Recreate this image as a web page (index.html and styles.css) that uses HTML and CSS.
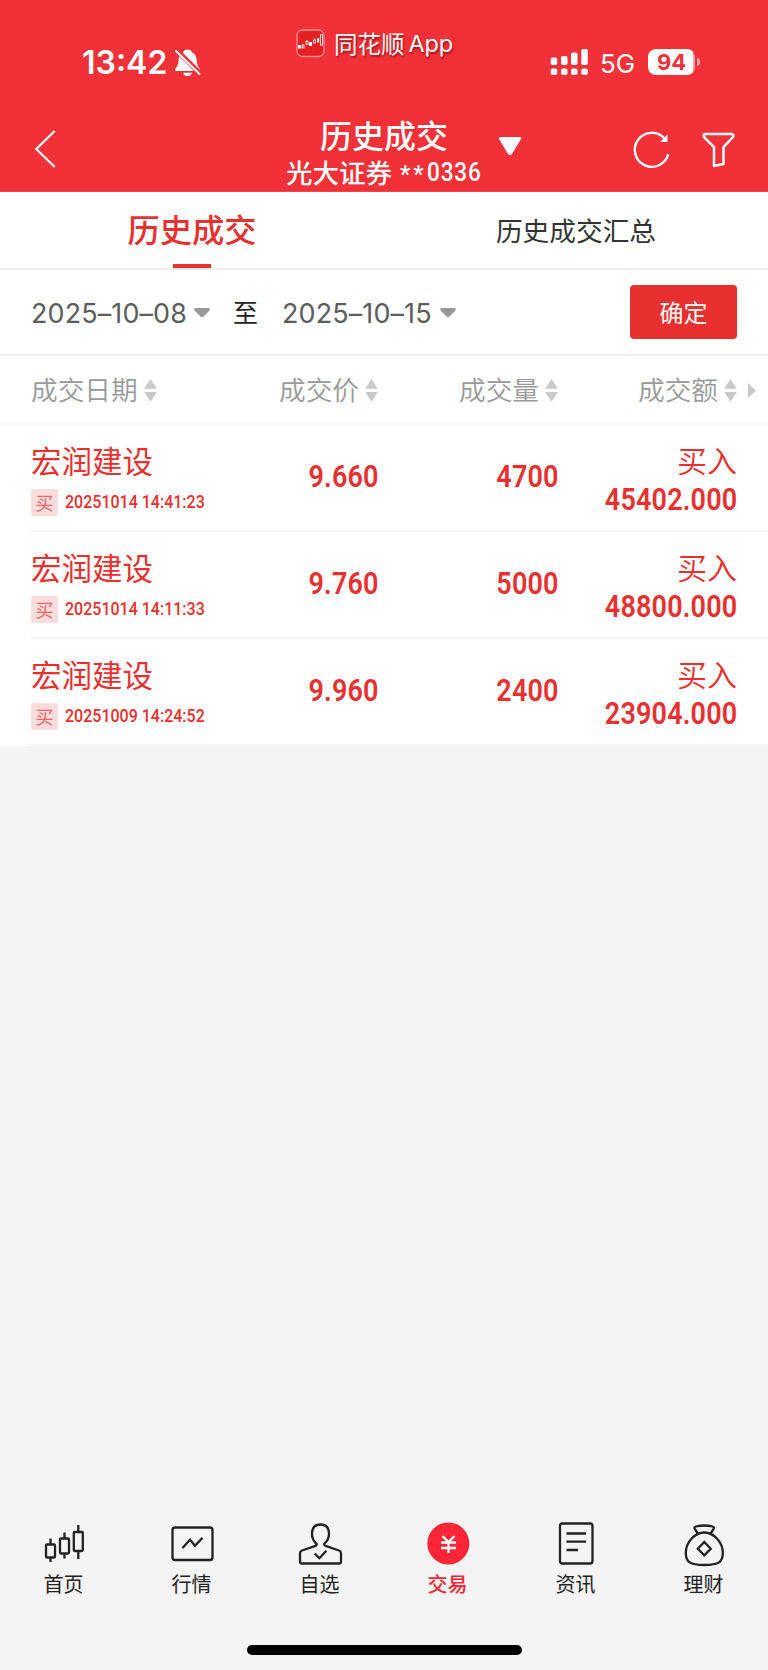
FILE: index.html
```html
<!DOCTYPE html>
<html lang="zh-CN">
<head>
<meta charset="utf-8">
<title>历史成交</title>
<link rel="stylesheet" href="styles.css">
</head>
<body>
<div class="screen">
  <header class="top">
    <div class="status">
      <div class="clock"><span class="time">13:42</span>
        <svg class="bell" viewBox="174 48 27 29" width="27" height="29"><path fill="#fff" d="M187.500 49.500c2.500 0 4 1.200 4.500 3 3.300 1.300 4.500 4 4.600 8 .1 3.500 1.400 6 3 8 .6.800.3 2.500-1.100 2.500H176.500c-1.500 0-1.800-1.700-1-2.600 2-2.200 3-4.700 3-8 .1-4 1.600-6.700 4.700-7.900.4-1.800 1.800-3 4.300-3zM183 72.700h9c-.6 2.100-2.300 3.400-4.500 3.400s-4-1.300-4.500-3.400z"/><path d="M176.500 50l24 24" stroke="#f23037" stroke-width="5"/><path d="M176 51l23.500 23" stroke="#fff" stroke-width="1.900" stroke-linecap="round"/></svg>
      </div>
      <div class="brand">
        <svg viewBox="296 29 29 29" width="29" height="29"><rect x="297" y="30" width="27" height="26.500" rx="5.500" fill="#e52025" stroke="#f98e91" stroke-width="1.300"/><g fill="#fff"><rect x="298" y="45" width="3.200" height="3.500"/><rect x="309" y="42" width="3" height="4"/><rect x="317" y="38" width="2.200" height="4.500"/></g><g fill="none" stroke="#fff" stroke-width=".8"><rect x="302.300" y="45" width="1.700" height="3"/><rect x="306" y="41.500" width="2" height="3"/><rect x="313.500" y="40" width="1.900" height="3"/><rect x="320.500" y="34.500" width="2" height="10.500"/><path d="M307 40v1.500M314.500 38.500v1.500M303 44v1"/></g></svg>
        <span class="brand-name">同花顺</span><span class="brand-app">App</span>
      </div>
      <div class="signal">
        <svg viewBox="550 48 39 28" width="39" height="28"><g fill="#fff"><rect x="550.700" y="57.500" width="6.500" height="7.500" rx="1.800"/><rect x="561" y="56" width="6.500" height="9" rx="1.800"/><rect x="571" y="52.500" width="6.500" height="12.500" rx="1.800"/><rect x="581.300" y="49" width="6.500" height="16" rx="1.800"/><rect x="550.700" y="68.500" width="6.500" height="6.500" rx="1.800"/><rect x="561" y="68.500" width="6.500" height="6.500" rx="1.800"/><rect x="571" y="68.500" width="6.500" height="6.500" rx="1.800"/><rect x="581.300" y="68.500" width="6.500" height="6.500" rx="1.800"/></g></svg>
        <span class="net">5G</span>
        <span class="battery"><span class="level">94</span></span><span class="tip"></span>
      </div>
    </div>
    <div class="nav">
      <svg class="back" viewBox="33 128 25 42" width="25" height="42"><path d="M54.700 131L36.300 149l18.400 18" fill="none" stroke="#fff" stroke-width="2.200"/></svg>
      <div class="heading"><div class="title">历史成交</div><div class="account"><span class="broker">光大证券</span><span class="stars">**</span><span class="din acct">0336</span></div></div>
      <svg class="drop" viewBox="498 136 24 20" width="24" height="20"><path d="M500.500 137h19.500q2 .3 1 2l-9 15q-2 2.300-4 0l-9-15q-.8-1.700 1.500-2z" fill="#fff"/></svg>
      <svg class="refresh" viewBox="632 130 40 40" width="40" height="40"><g fill="none" stroke="#fff" stroke-width="2.400"><path d="M664.500 138.500A17 17 0 1 0 668.300 154"/></g><path d="M667.500 134.500v7.500h-7.500z" fill="#fff"/></svg>
      <svg class="funnel" viewBox="702 131 34 38" width="34" height="38"><path d="M705 134h27q2 .5 1 3l-9.500 10.200V164l-9.500 2v-18.800L704 137q-1.200-2.500 1-3z" fill="none" stroke="#fff" stroke-width="2.500" stroke-linejoin="round"/></svg>
    </div>
  </header>

  <nav class="tabs"><div class="tab active">历史成交</div><div class="tab">历史成交汇总</div></nav>

  <section class="filter">
    <span class="date">2025–10–08</span><svg class="caret" viewBox="0 0 16 10" width="16" height="10"><path d="M1 0h14q1.500 1.500 0 3l-5.500 5.500q-1.500 1-3 0L1 3Q-.5 1.500 1 0z" fill="#999"/></svg>
    <span class="to">至</span>
    <span class="date second">2025–10–15</span><svg class="caret" viewBox="0 0 16 10" width="16" height="10"><path d="M1 0h14q1.500 1.500 0 3l-5.500 5.500q-1.500 1-3 0L1 3Q-.5 1.500 1 0z" fill="#999"/></svg>
    <button class="confirm">确定</button>
  </section>

  <section class="thead">
    <div class="th"><span>成交日期</span><svg class="sort" viewBox="0 0 13 23" width="13" height="23"><path d="M6.500 0L12.800 9.700H.2zM.2 13h12.600L6.500 22.800z" fill="#c9c9c9"/></svg></div>
    <div class="th"><span>成交价</span><svg class="sort" viewBox="0 0 13 23" width="13" height="23"><path d="M6.500 0L12.800 9.700H.2zM.2 13h12.600L6.500 22.800z" fill="#c9c9c9"/></svg></div>
    <div class="th"><span>成交量</span><svg class="sort" viewBox="0 0 13 23" width="13" height="23"><path d="M6.500 0L12.800 9.700H.2zM.2 13h12.600L6.500 22.800z" fill="#c9c9c9"/></svg></div>
    <div class="th"><span>成交额</span><svg class="sort" viewBox="0 0 13 23" width="13" height="23"><path d="M6.500 0L12.800 9.700H.2zM.2 13h12.600L6.500 22.800z" fill="#c9c9c9"/></svg></div>
    <svg class="more" viewBox="0 0 8 15" width="8" height="15"><path d="M0 0l8 7.500L0 15z" fill="#c9c9c9"/></svg>
  </section>

  <section class="rows">
    <div class="row">
      <div class="stock"><div class="name">宏润建设</div><div class="meta"><span class="badge">买</span><span class="din stamp">20251014 14:41:23</span></div></div>
      <div class="num"><span class="din">9.660</span></div><div class="num"><span class="din">4700</span></div>
      <div class="amount"><div class="side">买入</div><span class="din">45402.000</span></div>
    </div>
    <div class="row">
      <div class="stock"><div class="name">宏润建设</div><div class="meta"><span class="badge">买</span><span class="din stamp">20251014 14:11:33</span></div></div>
      <div class="num"><span class="din">9.760</span></div><div class="num"><span class="din">5000</span></div>
      <div class="amount"><div class="side">买入</div><span class="din">48800.000</span></div>
    </div>
    <div class="row">
      <div class="stock"><div class="name">宏润建设</div><div class="meta"><span class="badge">买</span><span class="din stamp">20251009 14:24:52</span></div></div>
      <div class="num"><span class="din">9.960</span></div><div class="num"><span class="din">2400</span></div>
      <div class="amount"><div class="side">买入</div><span class="din">23904.000</span></div>
    </div>
  </section>

  <footer class="bottom">
    <div class="menu">
      <div class="item"><svg viewBox="40 1520 48 48" width="48" height="48"><g fill="none" stroke="#222" stroke-width="2.300"><rect x="46" y="1544.500" width="9" height="13" rx="1"/><rect x="60" y="1538.500" width="9" height="15" rx="1"/><rect x="73.800" y="1532" width="9" height="19" rx="1"/><path d="M50.500 1538.500v6M50.500 1557.500v4.500M64.500 1532.500v6M64.500 1553.500v5M78.300 1525v7M78.300 1551v8"/></g></svg><span>首页</span></div>
      <div class="item"><svg viewBox="168 1520 48 48" width="48" height="48"><g fill="none" stroke="#222" stroke-width="2.300"><rect x="172.500" y="1527.500" width="40" height="32.500" rx="2.500"/><path d="M182.500 1548l7.500-8.300 5 6 7.500-8"/></g></svg><span>行情</span></div>
      <div class="item"><svg viewBox="296 1520 48 48" width="48" height="48"><g fill="none" stroke="#222" stroke-width="2.300" stroke-linejoin="round"><path d="M316.500 1543.500q.8 1.500-1 2.300l-13.500 4.700q-2 .7-2 2.500v8.500q0 2 2 2h37q2 0 2-2V1553q0-1.800-2-2.500l-13.500-4.700q-1.800-.8-1-2.300c3-2.500 4.500-5.500 4.500-10 0-5.700-3-9-8.500-9s-8.500 3.300-8.500 9c0 4.500 1.500 7.500 4 10z"/><path d="M314.700 1553.500l4.700 4.700 7-7.500" stroke-linejoin="miter"/></g></svg><span>自选</span></div>
      <div class="item on"><svg viewBox="424 1520 48 48" width="48" height="48"><circle cx="448.300" cy="1543.500" r="21" fill="#ff2436"/><path d="M442.500 1536l6 6 6-6M448.500 1542v11M441 1542.500h15M441 1548h15" fill="none" stroke="#fff" stroke-width="2.300"/></svg><span>交易</span></div>
      <div class="item"><svg viewBox="552 1520 48 48" width="48" height="48"><g fill="none" stroke="#222" stroke-width="2.300"><rect x="560" y="1523.500" width="32.500" height="40" rx="2.500"/><path d="M566.500 1533.500h19.500M566.500 1541.700h19.500M566.500 1550h11.500"/></g></svg><span>资讯</span></div>
      <div class="item"><svg viewBox="680 1520 48 48" width="48" height="48"><g fill="none" stroke="#222" stroke-width="2.300" stroke-linejoin="round"><path d="M698.500 1534.500L694.800 1529q-1-1.800 1-2.500 8.400-2 16.800 0 2 .7 1 2.500l-3.700 5.500"/><path d="M704.300 1532.500c-9 0-18.500 9-18.500 20.500 0 9 4 12 18.500 12s18.500-3 18.500-12c0-11.500-9.500-20.500-18.500-20.500z"/><path d="M704.300 1542l6.500 6.700-6.500 6.600-6.500-6.600z" stroke-linejoin="miter"/></g></svg><span>理财</span></div>
    </div>
    <div class="homebar"></div>
  </footer>
</div>
</body>
</html>
```
FILE: styles.css
```css
* { box-sizing: border-box; }
body { margin: 0; background: #f4f4f4; font-family: "Liberation Sans", "Noto Sans CJK SC", sans-serif; }
svg { display: block; flex: none; }
.screen { width: 768px; height: 1670px; display: flex; flex-direction: column; background: #f4f4f4; font-family: "Noto Sans CJK SC", sans-serif; }
.din { display: inline-block; font-family: Roboto, sans-serif; font-weight: 600; font-size: 31px; line-height: 36px; letter-spacing: .2px; margin-right: -.6px; transform: scaleX(.87); transform-origin: right center; white-space: pre; }

.top { height: 192px; background: #f23037; color: #fff; border-bottom: 1px solid #f0454a; }
.status { height: 112px; display: grid; grid-template-columns: 296px 254px 218px; }
.clock { display: flex; align-items: flex-start; padding: 44px 0 0 82px; }
.time { width: 92px; font: 600 32px/38px Inter, sans-serif; letter-spacing: 0; }
.bell { margin-top: 4px; }
.brand { display: flex; align-items: flex-start; padding-top: 29px; }
.brand-name { margin-left: 9px; font-size: 23.500px; line-height: 28px; text-shadow: 1px 2px 2px rgba(90,0,0,.55); }
.brand-app { margin-left: 4px; font: 400 23.500px/30px Inter, sans-serif; letter-spacing: -.2px; text-shadow: 1px 2px 2px rgba(90,0,0,.55); }
.signal { display: flex; align-items: flex-start; padding-top: 48px; }
.net { width: 48px; margin-left: 11px; font: 400 26px/31px Inter, sans-serif; }
.battery { width: 47px; height: 26px; margin-top: 1px; border-radius: 8px; background: linear-gradient(to right, #fff 45px, #f99ea1 45px); }
.level { display: block; text-align: center; color: #f23037; font: 700 22px/26px Inter, sans-serif; }
.tip { width: 3px; height: 8px; margin: 10px 0 0 2px; border-radius: 0 4px 4px 0; background: #f99ea1; }
.nav { height: 79px; display: grid; grid-template-columns: 33px 229px 236px 134px 70px 34px; align-items: start; }
.back { grid-column: 2; margin-top: 16px; }
.heading { grid-column: 3; display: flex; flex-direction: column; padding-left: 24px; }
.title { padding-left: 34px; font-weight: 500; font-size: 32px; line-height: 36px; margin-top: 4px; }
.account { display: flex; align-items: center; height: 30px; margin-top: 5px; white-space: nowrap; }
.broker { font-size: 26.500px; font-weight: 500; line-height: 30px; }
.stars { margin: 6px 0 0 8px; font: 600 23px/24px Roboto, sans-serif; letter-spacing: 3px; }
.acct { font-weight: 500; font-size: 26px; line-height: 30px; letter-spacing: .9px; transform-origin: left center; }
.drop { margin-top: 24px; }
.refresh { margin-top: 18px; }
.funnel { margin-top: 19px; }

.tabs { height: 78px; display: grid; grid-template-columns: 1fr 1fr; background: #fff; border-bottom: 2px solid #efefef; }
.tab { display: flex; justify-content: center; font-size: 26.700px; line-height: 75px; color: #333; }
.tab.active { flex-direction: column; align-items: center; justify-content: flex-start; font-size: 32.300px; font-weight: 500; line-height: 72px; color: #e93030; }
.tab.active::after { content: ""; width: 38px; height: 4px; background: #e93030; }

.filter { height: 86px; display: flex; align-items: center; padding: 0 31px 0 31px; background: #fff; border-bottom: 2px solid #f0f0f0; }
.date { width: 163px; margin-top: 1px; font: 400 26.900px/40px Inter, sans-serif; letter-spacing: .15px; color: #5c5c5c; white-space: nowrap; }
.date.second { width: 158px; margin-left: 24px; }
.caret { margin-top: 1px; }
.to { margin-left: 23px; margin-top: -2px; font-size: 25px; line-height: 40px; color: #222; }
.confirm { width: 107px; height: 54px; margin-left: auto; padding: 0; border: 0; border-radius: 4px; background: #e93030; color: #fff; font: 400 24px/54px "Noto Sans CJK SC", sans-serif; }

.thead { height: 69px; display: grid; grid-template-columns: 248px 180px 179px 110px 31px; align-items: center; padding-left: 31px; background: #fff; border-bottom: 2px solid #f7f7f7; }
.th { display: flex; align-items: center; white-space: nowrap; font-size: 26.700px; font-weight: 350; line-height: 40px; color: #999; }
.th span { margin-top: -2px; }
.sort { margin: 1px 0 0 6px; }
.more { margin-top: 1px; }

.rows { background: #fff; padding-left: 31px; }
.row { height: 107px; display: grid; grid-template-columns: 167px 180px 180px 179px; border-bottom: 2px solid #f7f7f7; color: #e93030; }
.name { margin-top: 13px; font-size: 30.500px; line-height: 44px; white-space: nowrap; }
.meta { display: flex; align-items: center; margin-top: 7px; }
.badge { width: 27px; height: 27px; flex: none; border-radius: 2px; background: #fddcdc; color: #ef6464; font-size: 18px; line-height: 26px; text-align: center; }
.stamp { margin-left: 7px; font-size: 18.500px; line-height: 27px; font-weight: 500; letter-spacing: 0; transform: scaleX(.865); transform-origin: left center; }
.num { padding-top: 34px; text-align: right; }
.amount { text-align: right; }
.side { margin-top: 12px; font-size: 30px; line-height: 44px; font-weight: 350; }
.amount .din { display: inline-block; vertical-align: top; margin-top: 1px; }

.bottom { margin-top: auto; height: 150px; }
.menu { display: grid; grid-template-columns: repeat(6, 1fr); height: 125px; }
.item { display: flex; flex-direction: column; align-items: center; font-size: 20px; line-height: 30px; color: #222; }
.item span { margin: 1px 1px 0 0; }
.item.on { color: #ff2436; font-weight: 500; }
.homebar { width: 275px; height: 10px; margin: 0 auto; border-radius: 5px; background: #000; }
```
